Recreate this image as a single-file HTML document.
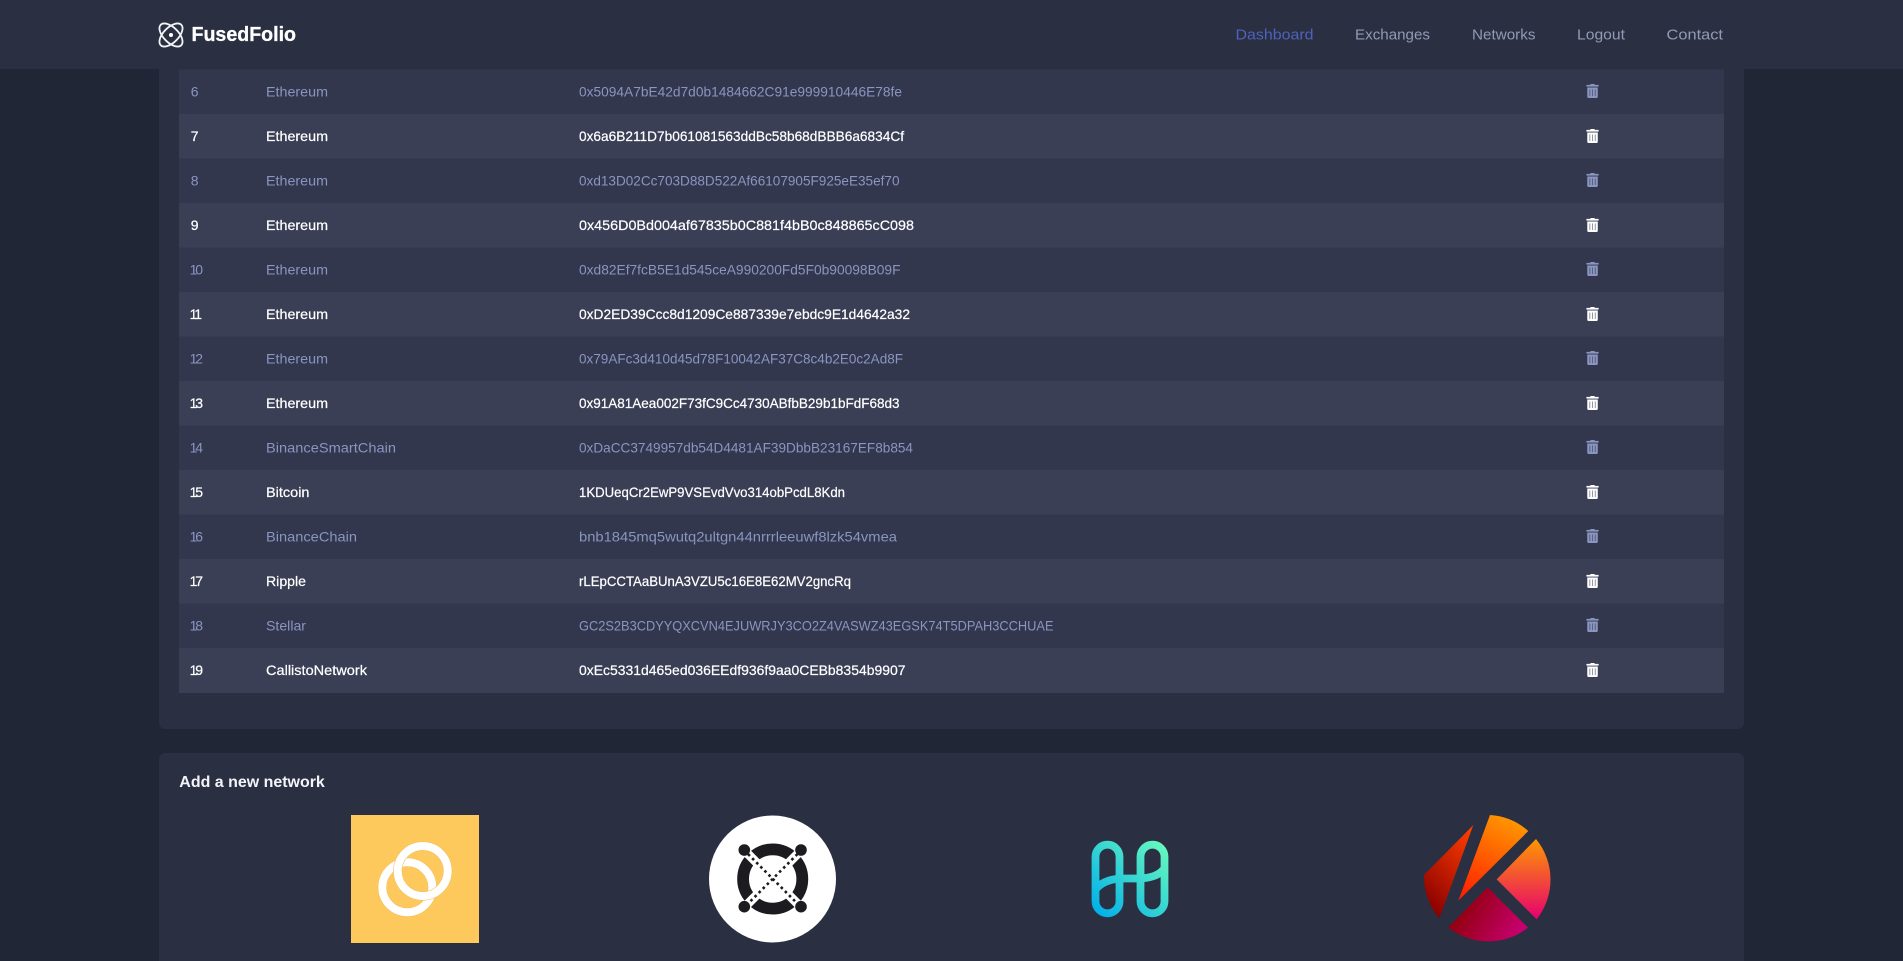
<!DOCTYPE html>
<html lang="en">
<head>
<meta charset="utf-8">
<title>FusedFolio</title>
<style>
html,body{margin:0;padding:0;width:1903px;height:961px;overflow:hidden;background:#212636}
svg{display:block}
text{font-family:"Liberation Sans",Arial,sans-serif;font-size:14px}
.m{fill:#8a95c0}
.w{fill:#fff;stroke:#fff;stroke-width:.22}
.nav{font-size:15px;fill:#919ab6}
</style>
</head>
<body>
<svg width="1903" height="961" viewBox="0 0 1903 961" xmlns="http://www.w3.org/2000/svg">
<defs>
<path id="t" d="M32 464a48 48 0 0 0 48 48h288a48 48 0 0 0 48-48V128H32zM310 208a10 10 0 0 1 20 0v224a10 10 0 0 1-20 0zM214 208a10 10 0 0 1 20 0v224a10 10 0 0 1-20 0zM118 208a10 10 0 0 1 20 0v224a10 10 0 0 1-20 0zM432 32H312l-9.4-18.7A24 24 0 0 0 281.1 0H166.8a23.72 23.72 0 0 0-21.4 13.3L136 32H16A16 16 0 0 0 0 48v32a16 16 0 0 0 16 16h416a16 16 0 0 0 16-16V48a16 16 0 0 0-16-16z"/>
<linearGradient id="hg" gradientUnits="userSpaceOnUse" x1="1095" y1="915" x2="1165" y2="843"><stop offset="0" stop-color="#00aee9"/><stop offset="1" stop-color="#69fabd"/></linearGradient>
<linearGradient id="k1" x1=".85" y1="0" x2=".3" y2="1"><stop offset="0" stop-color="#ff3d00"/><stop offset="1" stop-color="#8a0000"/></linearGradient>
<linearGradient id="k2" x1=".7" y1="0" x2=".3" y2="1"><stop offset="0" stop-color="#ff9800"/><stop offset="1" stop-color="#ff2400"/></linearGradient>
<linearGradient id="k3" x1=".6" y1="0" x2=".6" y2="1"><stop offset="0" stop-color="#ff9800"/><stop offset="1" stop-color="#e6006f"/></linearGradient>
<linearGradient id="k4" x1="0" y1=".4" x2="1" y2=".8"><stop offset="0" stop-color="#8a0000"/><stop offset="1" stop-color="#cc0077"/></linearGradient>
</defs>

<!-- cards -->
<rect x="159" y="-20" width="1585" height="749" rx="6" fill="#2a2f42"/>
<rect x="159" y="753" width="1585" height="240" rx="6" fill="#2a2f42"/>

<!-- rows -->
<rect x="179" y="69.5" width="1545" height="44.5" fill="#32374d"/>
<rect x="179" y="114" width="1545" height="44.5" fill="#3a3f55"/>
<rect x="179" y="158.5" width="1545" height="44.5" fill="#32374d"/>
<rect x="179" y="203" width="1545" height="44.5" fill="#3a3f55"/>
<rect x="179" y="247.5" width="1545" height="44.5" fill="#32374d"/>
<rect x="179" y="292" width="1545" height="44.5" fill="#3a3f55"/>
<rect x="179" y="336.5" width="1545" height="44.5" fill="#32374d"/>
<rect x="179" y="381" width="1545" height="44.5" fill="#3a3f55"/>
<rect x="179" y="425.5" width="1545" height="44.5" fill="#32374d"/>
<rect x="179" y="470" width="1545" height="44.5" fill="#3a3f55"/>
<rect x="179" y="514.5" width="1545" height="44.5" fill="#32374d"/>
<rect x="179" y="559" width="1545" height="44.5" fill="#3a3f55"/>
<rect x="179" y="603.5" width="1545" height="44.5" fill="#32374d"/>
<rect x="179" y="648" width="1545" height="45" fill="#3a3f55"/>

<!-- row text -->
<g class="m"><text x="190.8" y="96.5">6</text><text x="266" y="96.5" textLength="62" lengthAdjust="spacingAndGlyphs">Ethereum</text><text x="579" y="96.5" textLength="323" lengthAdjust="spacingAndGlyphs">0x5094A7bE42d7d0b1484662C91e999910446E78fe</text></g>
<g class="w"><text x="190.8" y="141">7</text><text x="266" y="141" textLength="62" lengthAdjust="spacingAndGlyphs">Ethereum</text><text x="579" y="141" textLength="325" lengthAdjust="spacingAndGlyphs">0x6a6B211D7b061081563ddBc58b68dBBB6a6834Cf</text></g>
<g class="m"><text x="190.8" y="185.5">8</text><text x="266" y="185.5" textLength="62" lengthAdjust="spacingAndGlyphs">Ethereum</text><text x="579" y="185.5" textLength="320.5" lengthAdjust="spacingAndGlyphs">0xd13D02Cc703D88D522Af66107905F925eE35ef70</text></g>
<g class="w"><text x="190.8" y="230">9</text><text x="266" y="230" textLength="62" lengthAdjust="spacingAndGlyphs">Ethereum</text><text x="579" y="230" textLength="335" lengthAdjust="spacingAndGlyphs">0x456D0Bd004af67835b0C881f4bB0c848865cC098</text></g>
<g class="m"><text x="189.600 195.200" y="274.5">10</text><text x="266" y="274.5" textLength="62" lengthAdjust="spacingAndGlyphs">Ethereum</text><text x="579" y="274.5" textLength="321.5" lengthAdjust="spacingAndGlyphs">0xd82Ef7fcB5E1d545ceA990200Fd5F0b90098B09F</text></g>
<g class="w"><text x="189.600 194.200" y="319">11</text><text x="266" y="319" textLength="62" lengthAdjust="spacingAndGlyphs">Ethereum</text><text x="579" y="319" textLength="331" lengthAdjust="spacingAndGlyphs">0xD2ED39Ccc8d1209Ce887339e7ebdc9E1d4642a32</text></g>
<g class="m"><text x="189.600 195.200" y="363.5">12</text><text x="266" y="363.5" textLength="62" lengthAdjust="spacingAndGlyphs">Ethereum</text><text x="579" y="363.5" textLength="324" lengthAdjust="spacingAndGlyphs">0x79AFc3d410d45d78F10042AF37C8c4b2E0c2Ad8F</text></g>
<g class="w"><text x="189.600 195.200" y="408">13</text><text x="266" y="408" textLength="62" lengthAdjust="spacingAndGlyphs">Ethereum</text><text x="579" y="408" textLength="320.5" lengthAdjust="spacingAndGlyphs">0x91A81Aea002F73fC9Cc4730ABfbB29b1bFdF68d3</text></g>
<g class="m"><text x="189.600 195.200" y="452.5">14</text><text x="266" y="452.5" textLength="130" lengthAdjust="spacingAndGlyphs">BinanceSmartChain</text><text x="579" y="452.5" textLength="334" lengthAdjust="spacingAndGlyphs">0xDaCC3749957db54D4481AF39DbbB23167EF8b854</text></g>
<g class="w"><text x="189.600 195.200" y="497">15</text><text x="266" y="497" textLength="43.5" lengthAdjust="spacingAndGlyphs">Bitcoin</text><text x="579" y="497" textLength="266" lengthAdjust="spacingAndGlyphs">1KDUeqCr2EwP9VSEvdVvo314obPcdL8Kdn</text></g>
<g class="m"><text x="189.600 195.200" y="541.5">16</text><text x="266" y="541.5" textLength="91" lengthAdjust="spacingAndGlyphs">BinanceChain</text><text x="579" y="541.5" textLength="318" lengthAdjust="spacingAndGlyphs">bnb1845mq5wutq2ultgn44nrrrleeuwf8lzk54vmea</text></g>
<g class="w"><text x="189.600 195.200" y="586">17</text><text x="266" y="586" textLength="40" lengthAdjust="spacingAndGlyphs">Ripple</text><text x="579" y="586" textLength="272" lengthAdjust="spacingAndGlyphs">rLEpCCTAaBUnA3VZU5c16E8E62MV2gncRq</text></g>
<g class="m"><text x="189.600 195.200" y="630.5">18</text><text x="266" y="630.5" textLength="40" lengthAdjust="spacingAndGlyphs">Stellar</text><text x="579" y="630.5" textLength="474.5" lengthAdjust="spacingAndGlyphs">GC2S2B3CDYYQXCVN4EJUWRJY3CO2Z4VASWZ43EGSK74T5DPAH3CCHUAE</text></g>
<g class="w"><text x="189.600 195.200" y="675">19</text><text x="266" y="675" textLength="101" lengthAdjust="spacingAndGlyphs">CallistoNetwork</text><text x="579" y="675" textLength="326.5" lengthAdjust="spacingAndGlyphs">0xEc5331d465ed036EEdf936f9aa0CEBb8354b9907</text></g>

<!-- trash icons -->
<g fill="#8a95c0">
<use href="#t" transform="translate(1586.4 84) scale(.02734)"/>
<use href="#t" transform="translate(1586.4 173) scale(.02734)"/>
<use href="#t" transform="translate(1586.4 262) scale(.02734)"/>
<use href="#t" transform="translate(1586.4 351) scale(.02734)"/>
<use href="#t" transform="translate(1586.4 440) scale(.02734)"/>
<use href="#t" transform="translate(1586.4 529) scale(.02734)"/>
<use href="#t" transform="translate(1586.4 618) scale(.02734)"/>
</g>
<g fill="#fff">
<use href="#t" transform="translate(1586.4 129) scale(.02734)"/>
<use href="#t" transform="translate(1586.4 218) scale(.02734)"/>
<use href="#t" transform="translate(1586.4 307) scale(.02734)"/>
<use href="#t" transform="translate(1586.4 396) scale(.02734)"/>
<use href="#t" transform="translate(1586.4 485) scale(.02734)"/>
<use href="#t" transform="translate(1586.4 574) scale(.02734)"/>
<use href="#t" transform="translate(1586.4 663) scale(.02734)"/>
</g>

<!-- header -->
<rect x="0" y="0" width="1903" height="69" fill="#2a2f42"/>
<g fill="none" stroke="#f2f3f7" stroke-width="1.8">
<ellipse cx="171" cy="35" rx="14.5" ry="7.5" transform="rotate(45 171 35)"/>
<ellipse cx="171" cy="35" rx="14.5" ry="7.5" transform="rotate(-45 171 35)"/>
</g>
<circle cx="171" cy="35" r="2" fill="#fff"/>
<text x="191.5" y="41" textLength="104.5" lengthAdjust="spacingAndGlyphs" style="font-size:20px;font-weight:700;fill:#fff;stroke:#fff;stroke-width:.3">FusedFolio</text>
<text class="nav" x="1235.5" y="39.5" textLength="78" lengthAdjust="spacingAndGlyphs" style="fill:#4f62bc">Dashboard</text>
<text class="nav" x="1355" y="39.5" textLength="75" lengthAdjust="spacingAndGlyphs">Exchanges</text>
<text class="nav" x="1472" y="39.5" textLength="63.5" lengthAdjust="spacingAndGlyphs">Networks</text>
<text class="nav" x="1577" y="39.5" textLength="48" lengthAdjust="spacingAndGlyphs">Logout</text>
<text class="nav" x="1666.5" y="39.5" textLength="56.5" lengthAdjust="spacingAndGlyphs">Contact</text>

<!-- add network -->
<text x="179.3" y="787" textLength="145.5" lengthAdjust="spacingAndGlyphs" style="font-size:16px;font-weight:700;fill:#f4f5f8">Add a new network</text>

<!-- yellow logo -->
<rect x="351" y="815" width="128" height="128" fill="#fdc95c"/>
<g fill="none">
<circle cx="407.3" cy="887.3" r="25" stroke="#f5bd55" stroke-width="9"/>
<circle cx="407.3" cy="887.3" r="25" stroke="#fff" stroke-width="8"/>
<circle cx="422.7" cy="871" r="25" stroke="#f5bd55" stroke-width="9"/>
<circle cx="422.7" cy="871" r="25" stroke="#fff" stroke-width="8"/>
</g>

<!-- elrond logo -->
<circle cx="772.5" cy="879" r="63.5" fill="#fff"/>
<circle cx="772.7" cy="879" r="29.6" fill="none" stroke="#1b1b20" stroke-width="11.8"/>
<path d="M744 850L801.500 907.700M801.500 850L744 907.700" stroke="#fff" stroke-width="9" fill="none"/>
<path d="M744 850L801.500 907.700M801.500 850L744 907.700" stroke="#1b1b20" stroke-width="2.600" stroke-dasharray="2.600 3.200" fill="none"/>
<g fill="#1b1b20">
<circle cx="744.300" cy="850" r="5.800"/><circle cx="801" cy="850" r="5.800"/>
<circle cx="744.300" cy="906.700" r="5.800"/><circle cx="801" cy="906.700" r="5.800"/>
</g>

<!-- harmony logo -->
<path fill="none" stroke="url(#hg)" stroke-width="7.800" stroke-linecap="round" d="M1095.500 856.700a12 12 0 0 1 24 0v44.600a12 12 0 0 1-24 0z M1140.500 856.700a12 12 0 0 1 24 0v44.600a12 12 0 0 1-24 0z M1097 888C1103 881 1114 878.500 1123 878.500H1137C1147 878.500 1157 877 1163 870"/>

<!-- klaytn logo -->
<g transform="translate(1410 800) scale(.33333)">
<path d="M190 75L42 225A192 192 0 0 0 88 355Z" fill="url(#k1)"/>
<path d="M240 45A192 192 0 0 1 355 93L145 302Z" fill="url(#k2)"/>
<path d="M378 117A192 192 0 0 1 380 358L260 238Z" fill="url(#k3)"/>
<path d="M233 262L354 383A192 192 0 0 1 115 382Z" fill="url(#k4)"/>
</g>
</svg>
</body>
</html>
